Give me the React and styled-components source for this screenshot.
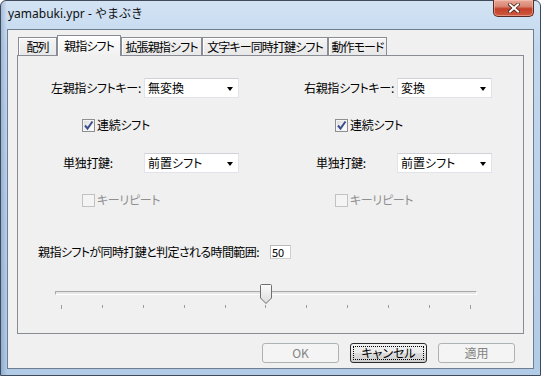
import React from 'react'
import styled, { createGlobalStyle } from 'styled-components'

const GlobalStyle = createGlobalStyle`
  html, body {
    margin: 0;
    padding: 0;
    width: 541px;
    height: 376px;
    overflow: hidden;
    background: #ffffff;
  }
  body {
    font-family: "Noto Sans CJK JP", "Noto Sans", sans-serif;
    font-size: 12px;
    color: #000;
  }
`

const ui = `"Noto Sans CJK JP", "Noto Sans", sans-serif`

function CloseGlyph () {
  return (
    <svg width="12" height="10" viewBox="0 0 12 10">
      <path d="M2 1.5 L10 8.5 M10 1.5 L2 8.5" stroke="#4a2018" strokeWidth="3.6" strokeLinecap="square" />
      <path d="M2 1.5 L10 8.5 M10 1.5 L2 8.5" stroke="#ffffff" strokeWidth="2" strokeLinecap="square" />
    </svg>
  )
}

function CheckMark () {
  return (
    <svg width="11" height="11" viewBox="0 0 11 11">
      <path d="M2 5.5 L4.5 8.5 L9.5 1.5" fill="none" stroke="#3c4f8c" strokeWidth="2" />
    </svg>
  )
}

function Thumb () {
  return (
    <svg width="12" height="20" viewBox="0 0 12 20">
      <defs>
        <linearGradient id="thumbFill" x1="0" y1="0" x2="0" y2="1">
          <stop offset="0" stopColor="#fbfbfb" />
          <stop offset="1" stopColor="#dcdcdc" />
        </linearGradient>
      </defs>
      <path
        d="M1.5 0.5 H10.5 Q11.5 0.5 11.5 1.5 V14 L6 19.5 L0.5 14 V1.5 Q0.5 0.5 1.5 0.5 Z"
        fill="url(#thumbFill)"
        stroke="#6f6f6f"
      />
    </svg>
  )
}

function Select ({ value }) {
  return (
    <SelectBox>
      <SelectText>{value}</SelectText>
      <SelectArrow />
    </SelectBox>
  )
}

function Check ({ label, checked, disabled }) {
  return (
    <CheckRow disabled={disabled}>
      <CheckBox disabled={disabled}>{checked && <CheckMark />}</CheckBox>
      <CheckLabel disabled={disabled}>{label}</CheckLabel>
    </CheckRow>
  )
}

function ShiftColumn ({ side, keyValue }) {
  return (
    <Column>
      <FieldRow>
        <FieldLabel align="right">{side}親指シフトキー:</FieldLabel>
        <Select value={keyValue} />
      </FieldRow>
      <CheckLine top={18}>
        <Check label="連続シフト" checked />
      </CheckLine>
      <FieldRow top={19}>
        <FieldLabel indent={45}>単独打鍵:</FieldLabel>
        <Select value="前置シフト" />
      </FieldRow>
      <CheckLine top={18}>
        <Check label="キーリピート" disabled />
      </CheckLine>
    </Column>
  )
}

const tabs = [
  { label: '配列', width: 39 },
  { label: '親指シフト', width: 64, active: true },
  { label: '拡張親指シフト', width: 81 },
  { label: '文字キー同時打鍵シフト', width: 126 },
  { label: '動作モード', width: 59 }
]

const TICKS = 11
const sliderValue = 5
const sliderMax = 10
const SLIDER_WIDTH = 422

export default function App () {
  const thumbLeft = Math.round((sliderValue / sliderMax) * (SLIDER_WIDTH - 12))

  return (
    <>
      <GlobalStyle />
      <Window>
        <TitleBar>
          <Title>yamabuki.ypr - やまぶき</Title>
          <CloseButton><CloseGlyph /></CloseButton>
        </TitleBar>
        <Client>
          <TabStrip>
            {tabs.map((t) => (
              <Tab key={t.label} width={t.width} active={t.active}>{t.label}</Tab>
            ))}
          </TabStrip>
          <Panel>
            <Columns>
              <ShiftColumn side="左" keyValue="無変換" />
              <ShiftColumn side="右" keyValue="変換" />
            </Columns>
            <TimeRow>
              <TimeLabel>親指シフトが同時打鍵と判定される時間範囲:</TimeLabel>
              <NumberBox>50</NumberBox>
            </TimeRow>
            <Slider>
              <Track />
              <Ticks>
                {Array.from({ length: TICKS }).map((_, i) => (
                  <Tick key={i} edge={i === 0 || i === TICKS - 1} />
                ))}
              </Ticks>
              <ThumbHolder style={{ left: thumbLeft }}>
                <Thumb />
              </ThumbHolder>
            </Slider>
          </Panel>
          <ButtonRow>
            <Button disabled>OK</Button>
            <Button focused>
              <FocusRing>キャンセル</FocusRing>
            </Button>
            <Button disabled>適用</Button>
          </ButtonRow>
        </Client>
      </Window>
    </>
  )
}

const Window = styled.div`
  width: 541px;
  height: 376px;
  box-sizing: border-box;
  display: flex;
  flex-direction: column;
  border: 1px solid #3f4b5a;
  border-radius: 6px 6px 0 0;
  background:
    linear-gradient(90deg, rgba(40, 80, 140, 0.25) 0px, rgba(40, 80, 140, 0) 6px),
    linear-gradient(180deg, #d3e3f4 0%, #c3d8ee 12%, #b9d0ea 60%, #b2cbe6 100%);
  padding: 0 6px 6px 6px;
`

const TitleBar = styled.div`
  height: 28px;
  display: flex;
  align-items: flex-start;
`

const Title = styled.div`
  padding: 5px 0 0 1px;
  font-family: "Noto Sans", "Noto Sans CJK JP", sans-serif;
  font-size: 12px;
  line-height: 16px;
  color: #101010;
`

const CloseButton = styled.div`
  margin: -1px 0 0 auto;
  width: 41px;
  height: 17px;
  box-sizing: border-box;
  border: 1px solid #5a2a24;
  border-top: none;
  border-radius: 0 0 5px 5px;
  background: linear-gradient(180deg, #e8a897 0%, #d98672 40%, #c2402a 55%, #cf5a3f 100%);
  box-shadow: inset 0 0 0 1px rgba(255, 210, 200, 0.45);
  display: flex;
  align-items: center;
  justify-content: center;
`

const Client = styled.div`
  flex: 1;
  display: flex;
  flex-direction: column;
  background: #f0f0f0;
  border: 1px solid #6e7e90;
  padding: 5px 9px 5px 9px;
`

const TabStrip = styled.div`
  height: 20px;
  display: flex;
  align-items: flex-end;
  padding-left: 1px;
  position: relative;
  z-index: 1;
`

const Tab = styled.div`
  width: ${(p) => p.width}px;
  height: ${(p) => (p.active ? 21 : 18)}px;
  margin-bottom: ${(p) => (p.active ? -1 : 0)}px;
  box-sizing: border-box;
  border: 1px solid #898c95;
  border-bottom: none;
  background: ${(p) => (p.active ? 'linear-gradient(180deg, #ffffff 0%, #f6f6f6 60%, #f0f0f0 100%)' : 'linear-gradient(180deg, #f4f4f4 0%, #e8e8e8 100%)')};
  box-shadow: inset 1px 1px 0 #ffffff;
  display: flex;
  align-items: center;
  justify-content: center;
  font-family: ${ui};
  font-size: 12px;
  font-feature-settings: "palt" 1;
  letter-spacing: -0.9px;
  line-height: 14px;
  padding-top: ${(p) => (p.active ? 0 : 1)}px;
  color: #000;
  white-space: nowrap;
  overflow: hidden;
`

const Panel = styled.div`
  height: 279px;
  box-sizing: border-box;
  border: 1px solid #898c95;
  background: #f0f0f0;
  padding-top: 22px;
  display: flex;
  flex-direction: column;
`

const Columns = styled.div`
  display: grid;
  grid-template-columns: 253px 1fr;
`

const Column = styled.div`
  display: flex;
  flex-direction: column;
`

const FieldRow = styled.div`
  display: flex;
  align-items: center;
  height: 20px;
  margin-top: ${(p) => p.top || 0}px;
`

const FieldLabel = styled.div`
  width: 123px;
  margin-right: 3px;
  box-sizing: border-box;
  padding-left: ${(p) => p.indent || 0}px;
  text-align: ${(p) => p.align || 'left'};
  font-feature-settings: "palt" 1;
  letter-spacing: -0.3px;
  white-space: nowrap;
  line-height: 14px;
`

const SelectBox = styled.div`
  width: 95px;
  height: 20px;
  box-sizing: border-box;
  background: #fff;
  border: 1px solid #e2e3ea;
  border-top-color: #d0d1d6;
  display: flex;
  align-items: center;
  padding: 0 5px 0 3px;
`

const SelectText = styled.span`
  flex: 1;
  font-feature-settings: "palt" 1;
  line-height: 14px;
`

const SelectArrow = styled.span`
  width: 0;
  height: 0;
  border-left: 3.5px solid transparent;
  border-right: 3.5px solid transparent;
  border-top: 4px solid #000;
  margin-top: 2px;
`

const CheckLine = styled.div`
  height: 18px;
  display: flex;
  align-items: center;
  margin-top: ${(p) => p.top || 0}px;
  padding-left: 64px;
`

const CheckRow = styled.div`
  display: flex;
  align-items: center;
  gap: 2px;
`

const CheckBox = styled.div`
  width: 13px;
  height: 13px;
  box-sizing: border-box;
  border: 1px solid ${(p) => (p.disabled ? '#c2c2c2' : '#8e8f8f')};
  background: ${(p) => (p.disabled ? '#f4f4f4' : 'linear-gradient(135deg, #d8d8d8 0%, #f4f4f4 60%, #ffffff 100%)')};
  display: flex;
  align-items: center;
  justify-content: center;
  box-shadow: ${(p) => (p.disabled ? 'none' : 'inset 0 0 0 1px #f4f4f4')};
`

const CheckLabel = styled.span`
  color: ${(p) => (p.disabled ? '#8f8f8f' : '#000')};
  font-feature-settings: "palt" 1;
  letter-spacing: -0.3px;
  line-height: 14px;
`

const TimeRow = styled.div`
  margin-top: 36px;
  height: 14px;
  display: flex;
  align-items: center;
`

const TimeLabel = styled.div`
  width: 232px;
  padding-left: 20px;
  font-feature-settings: "palt" 1;
  letter-spacing: -0.6px;
  white-space: nowrap;
  line-height: 14px;
`

const NumberBox = styled.div`
  width: 21px;
  height: 14px;
  box-sizing: border-box;
  background: #fff;
  border: 1px solid #cfcfcf;
  border-top-color: #b9b9b9;
  border-left-color: #b9b9b9;
  font-size: 11px;
  line-height: 12px;
  padding-left: 1px;
`

const Slider = styled.div`
  position: relative;
  margin: 25px 0 0 37px;
  width: ${SLIDER_WIDTH}px;
  height: 25px;
  padding-top: 7px;
  box-sizing: border-box;
`

const Track = styled.div`
  height: 4px;
  box-sizing: border-box;
  border-top: 1px solid #a9a9a9;
  border-left: 1px solid #a9a9a9;
  border-bottom: 1px solid #ffffff;
  border-right: 1px solid #ffffff;
  background: #e6e6e6;
`

const Ticks = styled.div`
  margin-top: 10px;
  padding: 0 6px;
  display: flex;
  justify-content: space-between;
  align-items: flex-start;
`

const Tick = styled.span`
  width: 1px;
  height: ${(p) => (p.edge ? 4 : 3)}px;
  background: #9d9d9d;
`

const ThumbHolder = styled.div`
  position: absolute;
  top: 0;
  width: 12px;
  height: 20px;
  line-height: 0;
`

const ButtonRow = styled.div`
  margin-top: 9px;
  display: flex;
  justify-content: flex-end;
  gap: 11px;
  padding-right: 9px;
`

const Button = styled.div`
  width: 77px;
  height: 20px;
  box-sizing: border-box;
  border-radius: 3px;
  border: 1px solid ${(p) => (p.disabled ? '#adb2b5' : '#2b2b2b')};
  background: ${(p) => (p.disabled ? '#f4f4f4' : 'linear-gradient(180deg, #f2f2f2 0%, #ebebeb 48%, #dcdcdc 52%, #cfcfcf 100%)')};
  color: ${(p) => (p.disabled ? '#838383' : '#000')};
  display: flex;
  align-items: center;
  justify-content: center;
  padding: 2px;
  font-feature-settings: "palt" 1;
  line-height: 14px;
`

const FocusRing = styled.span`
  flex: 1;
  align-self: stretch;
  display: flex;
  align-items: center;
  justify-content: center;
  border: 1px dotted #000;
`
